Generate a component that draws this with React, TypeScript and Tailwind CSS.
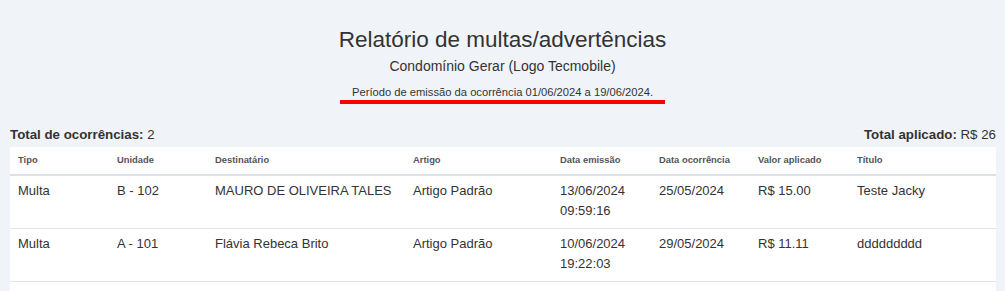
const COLUMNS = [
  { label: "Tipo", width: "w-[99px]" },
  { label: "Unidade", width: "w-[98px]" },
  { label: "Destinatário", width: "w-[198px]" },
  { label: "Artigo", width: "w-[147px]" },
  { label: "Data emissão", width: "w-[99px]" },
  { label: "Data ocorrência", width: "w-[99px]" },
  { label: "Valor aplicado", width: "w-[99px]" },
  { label: "Título", width: "" },
];

const ROWS = [
  {
    tipo: "Multa",
    unidade: "B - 102",
    destinatario: "MAURO DE OLIVEIRA TALES",
    artigo: "Artigo Padrão",
    emissao: ["13/06/2024", "09:59:16"],
    ocorrencia: "25/05/2024",
    valor: "R$ 15.00",
    titulo: "Teste Jacky",
  },
  {
    tipo: "Multa",
    unidade: "A - 101",
    destinatario: "Flávia Rebeca Brito",
    artigo: "Artigo Padrão",
    emissao: ["10/06/2024", "19:22:03"],
    ocorrencia: "29/05/2024",
    valor: "R$ 11.11",
    titulo: "ddddddddd",
  },
];

export default function App() {
  return (
    <div className="min-h-[291px] bg-[#f0f3f8] font-['Liberation_Sans',Arial,sans-serif] text-[#333]">
      <div className="flex flex-col items-center pt-[26px]">
        <h1 className="text-[22.5px] leading-[28px] text-[#333]">
          Relatório de multas/advertências
        </h1>
        <p className="mt-[2px] text-[14px] leading-[20px]">
          Condomínio Gerar (Logo Tecmobile)
        </p>
        <p className="mt-[8px] border-b-4 border-[#ff0000] px-3 text-[11.2px] leading-[16px]">
          Período de emissão da ocorrência 01/06/2024 a 19/06/2024.
        </p>
      </div>

      <div className="px-[10px] pr-[9px]">
        <div className="mt-[21px] flex justify-between text-[13.3px] leading-[20px]">
          <div>
            <span className="font-bold">Total de ocorrências:</span> 2
          </div>
          <div>
            <span className="font-bold">Total aplicado:</span> R$ 26
          </div>
        </div>

        <div className="mt-[2px] bg-white pb-[10px]">
          <table className="w-full table-fixed border-collapse text-left">
            <thead>
              <tr className="border-b-2 border-[#dee2e6]">
                {COLUMNS.map((c) => (
                  <th
                    key={c.label}
                    className={`${c.width} h-[28px] px-2 text-[9.4px] font-bold text-[#555]`}
                  >
                    {c.label}
                  </th>
                ))}
              </tr>
            </thead>
            <tbody className="text-[13px] leading-[20px]">
              {ROWS.map((r) => (
                <tr key={r.unidade} className="border-b border-[#e3e5e8] align-top">
                  <td className="px-2 pt-[5px] pb-[7px]">{r.tipo}</td>
                  <td className="px-2 pt-[5px] pb-[7px]">{r.unidade}</td>
                  <td className="px-2 pt-[5px] pb-[7px]">{r.destinatario}</td>
                  <td className="px-2 pt-[5px] pb-[7px]">{r.artigo}</td>
                  <td className="px-2 pt-[5px] pb-[7px]">
                    {r.emissao[0]}
                    <br />
                    {r.emissao[1]}
                  </td>
                  <td className="px-2 pt-[5px] pb-[7px]">{r.ocorrencia}</td>
                  <td className="px-2 pt-[5px] pb-[7px]">{r.valor}</td>
                  <td className="px-2 pt-[5px] pb-[7px]">{r.titulo}</td>
                </tr>
              ))}
            </tbody>
          </table>
        </div>
      </div>
    </div>
  );
}
